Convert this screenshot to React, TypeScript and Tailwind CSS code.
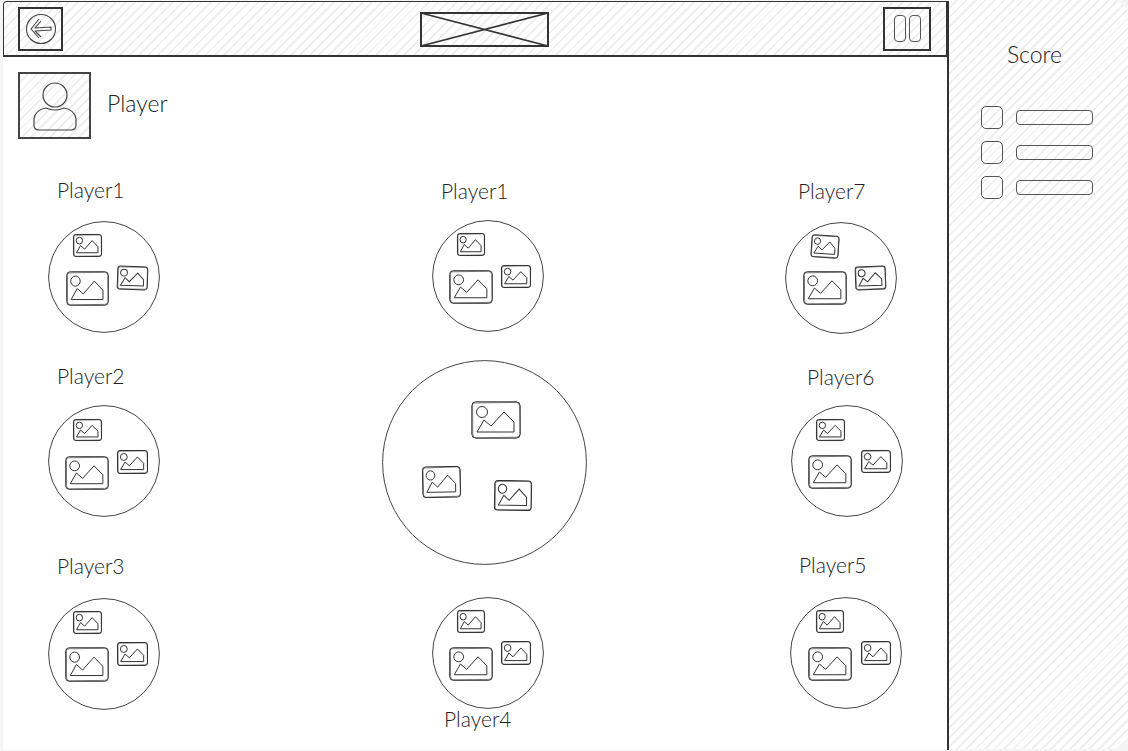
import React from 'react';

type Pic = { x: number; y: number; w: number; h: number; r?: number };

const hatch =
  'bg-[repeating-linear-gradient(135deg,#ffffff_0px,#ffffff_4.7px,#efefef_4.7px,#efefef_6.7px)]';

const sketchFont = "font-['Lato',sans-serif] font-light text-[#222]";

// sketchy picture placeholder: double rounded frame, sun and mountain
const Picture = ({ x, y, w, h, r = 0 }: Pic) => (
  <g transform={`rotate(${r} ${x + w / 2} ${y + h / 2})`}>
    <svg x={x} y={y} width={w} height={h} viewBox="0 0 50 38" preserveAspectRatio="none" overflow="visible">
      <g fill="none" stroke="#333" strokeWidth="1">
        <rect x="0.8" y="0.8" width="48.4" height="36.4" rx="4" vectorEffect="non-scaling-stroke" />
        <path
          d="M1.6 5 Q1 1.8 5 2 L45 1.4 Q48.6 1.6 48.6 5 L49 33 Q48.8 36.2 45 36.2 L5 36.8 Q1.4 36.6 1.8 33 Z"
          strokeWidth="0.6"
          vectorEffect="non-scaling-stroke"
        />
        <circle cx="11" cy="11" r="5.5" vectorEffect="non-scaling-stroke" />
        <path d="M6 31 L13 19 L20 25 L33 11 L43 21 L43 31 Z" vectorEffect="non-scaling-stroke" />
      </g>
    </svg>
  </g>
);

const Bubble = ({ size, pics }: { size: number; pics: Pic[] }) => (
  <svg width={size} height={size} viewBox={`0 0 ${size} ${size}`} className="block shrink-0">
    <circle cx={size / 2} cy={size / 2} r={size / 2 - 0.6} fill="#fff" stroke="#444" strokeWidth="1" />
    {pics.map((p, i) => (
      <Picture key={i} {...p} />
    ))}
  </svg>
);

const Seat = ({
  name,
  labelClass,
  pics,
  below = false,
  className = '',
}: {
  name: string;
  labelClass: string;
  pics: Pic[];
  below?: boolean;
  className?: string;
}) => (
  <div className={`flex ${below ? 'flex-col-reverse' : 'flex-col'} ${className}`}>
    <div className={`${sketchFont} text-[21px] leading-6 whitespace-nowrap ${labelClass}`}>{name}</div>
    <Bubble size={112} pics={pics} />
  </div>
);

const trio = (a: Pic, b: Pic, c: Pic) => [a, b, c];

export default function App() {
  return (
    <div className="w-[1128px] h-[751px] overflow-hidden bg-[#f5f5f5] pb-[2px] flex">
      {/* Game area */}
      <div className="w-[949px] h-full pl-[3px] shrink-0">
        <div className="w-[946px] h-full bg-white border-r-2 border-[#333]">
          {/* Top bar */}
          <div className={`h-[56px] mt-[1px] border border-b-2 border-[#333] rounded-tl-sm flex items-center justify-between pl-[14px] pr-[15px] ${hatch}`}>
            <div className="w-[45px] h-[44px] border-2 border-[#333] flex items-center justify-center">
              <svg width="32" height="32" viewBox="0 0 32 32" fill="none" stroke="#444" strokeWidth="1.1">
                <circle cx="16" cy="16" r="14.5" />
                <path d="M14 6 L6 16 L14 25 M16 8 L10 15 L26 14 L26 17 L10 18 L16 24" strokeLinejoin="round" />
              </svg>
            </div>
            <svg width="129" height="35" viewBox="0 0 129 35" fill="none" stroke="#333" className="ml-[22px] mt-[2px]">
              <rect x="1" y="1" width="127" height="33" strokeWidth="2" />
              <path d="M1 1 L128 34 M1 34 L128 1" strokeWidth="1.8" />
            </svg>
            <div className="w-[48px] h-[44px] border-2 border-[#333] flex items-center justify-center gap-[3px]">
              <div className="w-[12px] h-[27px] rounded-[4px] border border-[#555]" />
              <div className="w-[12px] h-[27px] rounded-[4px] border border-[#555]" />
            </div>
          </div>

          {/* Current player */}
          <div className="flex items-start pl-[15px] pt-[15px]">
            <div className={`w-[73px] h-[67px] border-2 border-[#444] flex items-center justify-center ${hatch}`}>
              <svg width="46" height="50" viewBox="0 0 46 50" fill="none" stroke="#444" strokeWidth="1.2">
                <circle cx="23" cy="14" r="12" />
                <path d="M7 49 Q2 49 2 44 L2 38 Q3 29 14 27 Q23 31 32 27 Q43 29 44 38 L44 44 Q44 49 39 49 Z" />
              </svg>
            </div>
            <div className={`${sketchFont} text-[23px] ml-[16px] mt-[19px] leading-6`}>Player</div>
          </div>

          {/* Table */}
          <div className="flex mt-[39px]">
            <div className="w-[112px] ml-[45px] shrink-0">
              <Seat
                name="Player1"
                labelClass="ml-[9px] h-[43px]"
                pics={trio(
                  { x: 25, y: 13, w: 29, h: 23 },
                  { x: 18, y: 50, w: 43, h: 35 },
                  { x: 69, y: 45, w: 31, h: 24, r: 2 },
                )}
              />
              <Seat
                name="Player2"
                labelClass="ml-[9px] h-[41px]"
                className="mt-[31px]"
                pics={trio(
                  { x: 25, y: 14, w: 29, h: 22 },
                  { x: 17, y: 51, w: 44, h: 34 },
                  { x: 69, y: 45, w: 31, h: 24 },
                )}
              />
              <Seat
                name="Player3"
                labelClass="ml-[9px] h-[44px]"
                className="mt-[37px]"
                pics={trio(
                  { x: 25, y: 13, w: 29, h: 23 },
                  { x: 17, y: 49, w: 44, h: 35 },
                  { x: 69, y: 44, w: 31, h: 24 },
                )}
              />
            </div>

            <div className="w-[112px] ml-[272px] shrink-0">
              <Seat
                name="Player1"
                labelClass="ml-[9px] mt-[1px] h-[41px]"
                pics={trio(
                  { x: 25, y: 13, w: 28, h: 23 },
                  { x: 17, y: 50, w: 44, h: 34 },
                  { x: 69, y: 45, w: 30, h: 23 },
                )}
              />
              <div className="mt-[28px] -ml-[50px]">
                <Bubble
                  size={205}
                  pics={trio(
                    { x: 89, y: 41, w: 50, h: 38 },
                    { x: 40, y: 106, w: 39, h: 32, r: -1 },
                    { x: 112, y: 120, w: 38, h: 31, r: 1 },
                  )}
                />
              </div>
              <Seat
                name="Player4"
                below
                labelClass="ml-[12px] -mt-[2px]"
                className="mt-[32px]"
                pics={trio(
                  { x: 25, y: 13, w: 28, h: 23 },
                  { x: 17, y: 50, w: 44, h: 34 },
                  { x: 69, y: 44, w: 30, h: 24 },
                )}
              />
            </div>

            <div className="w-[118px] ml-[241px] shrink-0">
              <Seat
                name="Player7"
                labelClass="ml-[13px] mt-[1px] h-[43px]"
                pics={trio(
                  { x: 26, y: 13, w: 28, h: 23, r: 4 },
                  { x: 18, y: 49, w: 44, h: 34 },
                  { x: 70, y: 44, w: 31, h: 24, r: -2 },
                )}
              />
              <Seat
                name="Player6"
                labelClass="ml-[16px] h-[40px]"
                className="mt-[31px] ml-[6px]"
                pics={trio(
                  { x: 25, y: 14, w: 29, h: 22 },
                  { x: 17, y: 50, w: 44, h: 34 },
                  { x: 70, y: 45, w: 30, h: 23 },
                )}
              />
              <Seat
                name="Player5"
                labelClass="ml-[9px] h-[44px]"
                className="mt-[36px] ml-[5px]"
                pics={trio(
                  { x: 26, y: 13, w: 28, h: 23 },
                  { x: 18, y: 50, w: 44, h: 34 },
                  { x: 71, y: 44, w: 30, h: 24 },
                )}
              />
            </div>
          </div>
        </div>
      </div>

      {/* Score panel */}
      <div className={`flex-1 h-full rounded-tr-[16px] rounded-br-[16px] pt-[42px] ${hatch}`}>
        <div className={`${sketchFont} text-[23px] leading-6 text-center pr-[8px]`}>Score</div>
        <div className="mt-[40px] ml-[32px] flex flex-col gap-[12px]">
          {[0, 1, 2].map((i) => (
            <div key={i} className="flex items-center gap-[13px]">
              <div className="w-[22px] h-[23px] rounded-[5px] border border-[#555]" />
              <div className="w-[77px] h-[15px] rounded-[4px] border border-[#555]" />
            </div>
          ))}
        </div>
      </div>
    </div>
  );
}
